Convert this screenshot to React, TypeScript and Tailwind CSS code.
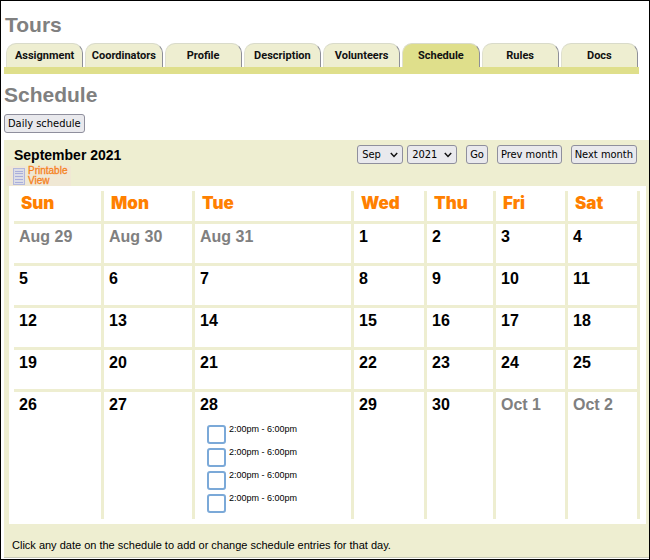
import React from "react";

const tabs = ["Assignment", "Coordinators", "Profile", "Description", "Volunteers", "Schedule", "Rules", "Docs"];

const columns = [
  { name: "Sun", width: "w-[90px]" },
  { name: "Mon", width: "w-[91px]" },
  { name: "Tue", width: "w-[159px]" },
  { name: "Wed", width: "w-[73px]" },
  { name: "Thu", width: "w-[69px]" },
  { name: "Fri", width: "w-[72px]" },
  { name: "Sat", width: "w-[72px]" },
];

const weeks = [
  ["Aug 29", "Aug 30", "Aug 31", "1", "2", "3", "4"],
  ["5", "6", "7", "8", "9", "10", "11"],
  ["12", "13", "14", "15", "16", "17", "18"],
  ["19", "20", "21", "22", "23", "24", "25"],
  ["26", "27", "28", "29", "30", "Oct 1", "Oct 2"],
];

const shifts = ["2:00pm - 6:00pm", "2:00pm - 6:00pm", "2:00pm - 6:00pm", "2:00pm - 6:00pm"];

const control =
  "h-[19px] rounded-[3px] border border-[#8f8f9d] bg-[#e9e9ed] font-['DejaVu_Sans_Condensed','DejaVu_Sans',sans-serif] text-[11px] leading-[17px] text-black";

function Button({ children }: { children: React.ReactNode }) {
  return (
    <button type="button" className={`${control} px-[3px] whitespace-nowrap`}>
      {children}
    </button>
  );
}

function Select({ label, value, options, width }: { label: string; value: string; options: string[]; width: string }) {
  return (
    <span className={`relative ${width}`}>
      <select aria-label={label} defaultValue={value} className={`${control} block w-full appearance-none pl-1`}>
        {options.map((o) => (
          <option key={o}>{o}</option>
        ))}
      </select>
      <svg
        className="pointer-events-none absolute top-[7px] right-[5px] h-[6px] w-[8px]"
        viewBox="0 0 8 6"
        fill="none"
        stroke="#111"
        strokeWidth="1.5"
      >
        <path d="M0.8 1 L4 4.4 L7.2 1" />
      </svg>
    </span>
  );
}

function Tab({ name, active }: { name: string; active: boolean }) {
  return (
    <a
      href="#"
      aria-current={active ? "page" : undefined}
      className={`flex h-6 flex-1 basis-0 items-center justify-center rounded-t-[10px] border-t border-r border-l border-t-[#d9dbca] border-r-[#8e8f98] border-l-[#dfe0cf] pt-[2px] font-['Roboto',sans-serif] text-[11px] font-bold text-[#111] ${
        active ? "bg-[#dfdf8b]" : "bg-[#eeeed1]"
      }`}
    >
      {name}
    </a>
  );
}

function SheetIcon() {
  return (
    <svg className="h-[17px] w-[12px] shrink-0" viewBox="0 0 12 17">
      <rect x="0.5" y="0.5" width="11" height="16" fill="#dcdde6" stroke="#b3b8dc" />
      <path d="M2 3.5h8M2 5.5h8M2 8.5h8M2 11.5h8M2 14.5h8" stroke="#a9aedb" />
    </svg>
  );
}

export default function App() {
  return (
    <div className="border border-black bg-white pb-px pl-[3px] font-['Liberation_Sans',Arial,sans-serif] text-black">
      <h1 className="pt-3 pl-px text-[21px] leading-6 font-bold text-[#808080]">Tours</h1>

      <nav className="mt-[6px] mr-[10px] border-b-[7px] border-[#dfdf8b]">
        <div className="flex gap-[2px] pr-px pl-[2px]">
          {tabs.map((t) => (
            <Tab key={t} name={t} active={t === "Schedule"} />
          ))}
        </div>
      </nav>

      <h2 className="mt-[9px] mb-[7px] text-[21px] leading-6 font-bold text-[#808080]">Schedule</h2>
      <div className="flex">
        <Button>Daily schedule</Button>
      </div>

      <section className="mt-[7px] border-b border-[#c9cab8] bg-[#eeeed1]">
        <div className="flex h-[46px] items-start justify-between pt-[5px] pr-3 pl-[2px]">
          <div>
            <h3 className="pt-px pl-2 text-sm leading-[18px] font-bold">September 2021</h3>
            <a
              href="#"
              className="mt-[2px] flex h-5 w-[65px] items-center gap-[3px] bg-[#f0e8d4] pl-[7px] text-[10px] leading-[10px] text-[#f5821f] [-webkit-text-stroke:0.3px_#f5821f]"
            >
              <SheetIcon />
              <span className="flex flex-col">
                <span>Printable</span>
                <span>View</span>
              </span>
            </a>
          </div>
          <form className="flex gap-[9px]">
            <div className="flex gap-1">
              <Select label="Month" value="Sep" options={["Aug", "Sep", "Oct"]} width="w-[46px]" />
              <Select label="Year" value="2021" options={["2020", "2021", "2022"]} width="w-[50px]" />
            </div>
            <Button>Go</Button>
            <Button>Prev month</Button>
            <Button>Next month</Button>
          </form>
        </div>

        <div className="mr-[3px] ml-[5px] bg-white py-[5px] pr-[6px] pl-[5px]">
          <table className="w-full table-fixed border-separate border-spacing-0">
            <thead>
              <tr className="h-[33px]">
                {columns.map((c) => (
                  <th
                    key={c.name}
                    scope="col"
                    className={`${c.width} border-r-[3px] border-b-[3px] border-[#eeeed1] pl-[7px] text-left align-top font-['Inter',sans-serif] text-[17px] leading-6 font-black text-[#ff8000]`}
                  >
                    {c.name}
                  </th>
                ))}
              </tr>
            </thead>
            <tbody>
              {weeks.map((week, w) => {
                const last = w === weeks.length - 1;
                return (
                  <tr key={week[0]} className={last ? "h-[127px]" : "h-[42px]"}>
                    {week.map((day) => (
                      <td
                        key={day}
                        className={`border-r-[3px] border-[#eeeed1] pt-px pl-[5px] align-top ${last ? "" : "border-b-[3px]"}`}
                      >
                        <a
                          href="#"
                          className={`block text-base leading-6 font-bold ${day.includes(" ") ? "text-[#808080]" : "text-black"}`}
                        >
                          {day}
                        </a>
                        {day === "28" && (
                          <ul className="mt-2 flex flex-col gap-1 pl-[7px]">
                            {shifts.map((s, i) => (
                              <li key={i}>
                                <label className="flex gap-[3px] text-[9px] leading-[9px]">
                                  <input
                                    type="checkbox"
                                    className="size-[19px] shrink-0 appearance-none rounded-[3px] border-2 border-[#7ba9d8] bg-white"
                                  />
                                  {s}
                                </label>
                              </li>
                            ))}
                          </ul>
                        )}
                      </td>
                    ))}
                  </tr>
                );
              })}
            </tbody>
          </table>
        </div>

        <p className="pt-[13px] pb-1 pl-2 text-[11px] leading-4">
          Click any date on the schedule to add or change schedule entries for that day.
        </p>
      </section>
    </div>
  );
}
